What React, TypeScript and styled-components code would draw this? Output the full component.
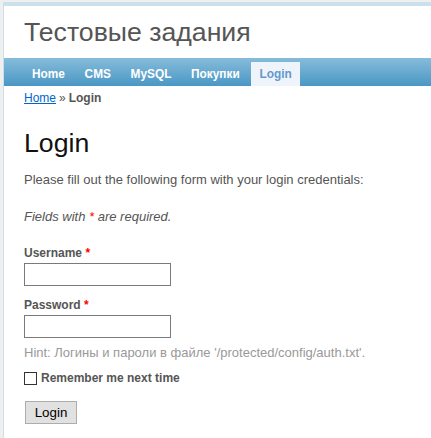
import React from "react";
import styled, { createGlobalStyle } from "styled-components";

const Global = createGlobalStyle`
  html, body {
    margin: 0;
    padding: 0;
    overflow: hidden;
    background: #efefef;
  }
  body {
    color: #555;
    font-family: "Liberation Sans", Arial, Helvetica, sans-serif;
    font-size: 13px;
    line-height: 20px;
  }
`;

const Page = styled.div`
  margin: 2px 0 0 3px;
  background: #fff;
  border: 1px solid #c9e0ed;
  border-right: none;
  min-height: 440px;
`;

const Header = styled.header`
  border-top: 3px solid #c9e0ed;
`;

const Logo = styled.div`
  padding: 10px 20px;
  font-size: 26.667px;
  line-height: 32px;
  color: #555;
`;

const Menu = styled.nav`
  height: 28px;
  box-sizing: border-box;
  padding: 4px 20px 0;
  display: flex;
  align-items: flex-end;
  gap: 3.7px;
  background: linear-gradient(#86bcda, #4a97c5);
`;

const MenuItem = styled.a<{ $active?: boolean }>`
  display: block;
  height: 24px;
  line-height: 24px;
  padding: 0 8px;
  font-size: 11.85px;
  font-weight: bold;
  text-decoration: none;
  color: ${(p) => (p.$active ? "#6399cd" : "#fff")};
  background: ${(p) => (p.$active ? "#eff4fa" : "transparent")};
`;

const Breadcrumbs = styled.div`
  padding: 5px 20px;
  font-size: 12px;
  line-height: 14px;
`;

const CrumbLink = styled.a`
  color: #0066cc;
  text-decoration: underline;
`;

const Sep = styled.span`
  margin: 0 3px;
`;

const Current = styled.span`
  font-weight: bold;
`;

const Content = styled.main`
  padding: 20px;
  display: flex;
  flex-direction: column;
  align-items: flex-start;
`;

const Title = styled.h1`
  margin: 0 0 13.33px;
  font-size: 26.667px;
  line-height: 26.667px;
  font-weight: normal;
  color: #111;
`;

const Text = styled.p<{ $italic?: boolean; $mb?: number }>`
  margin: 0 0 ${(p) => p.$mb ?? 0}px;
  font-style: ${(p) => (p.$italic ? "italic" : "normal")};
`;

const Required = styled.span`
  color: red;
`;

const Label = styled.label<{ $mt: number }>`
  display: block;
  margin-top: ${(p) => p.$mt}px;
  font-size: 12px;
  line-height: 18px;
  font-weight: bold;
`;

const Input = styled.input`
  margin: 1px 0 0;
  width: 147px;
  height: 23px;
  box-sizing: border-box;
  border: 1px solid #7a7a7a;
  padding: 2px;
  font: inherit;
  background: #fff;
`;

const Hint = styled.p`
  margin: 5px 0 0;
  color: #999;
`;

const CheckRow = styled.div`
  margin-top: 6px;
  display: flex;
  align-items: center;
  gap: 4px;
`;

const Check = styled.input`
  appearance: none;
  margin: 0;
  width: 13px;
  height: 13px;
  box-sizing: border-box;
  border: 1px solid #333;
  background: #fff;
`;

const CheckLabel = styled.label`
  font-size: 12px;
  line-height: 18px;
  font-weight: bold;
`;

const Button = styled.button`
  margin: 14px 0 0 1px;
  width: 52px;
  height: 23px;
  box-sizing: border-box;
  border: 1px solid #adadad;
  background: #e1e1e1;
  color: #000;
  font-family: "Liberation Sans", Arial, sans-serif;
  font-size: 13.333px;
  padding: 0;
`;

export default function App() {
  return (
    <>
      <Global />
      <Page>
        <Header>
          <Logo>Тестовые задания</Logo>
        </Header>
        <Menu>
          <MenuItem href="#">Home</MenuItem>
          <MenuItem href="#">CMS</MenuItem>
          <MenuItem href="#">MySQL</MenuItem>
          <MenuItem href="#">Покупки</MenuItem>
          <MenuItem href="#" $active>
            Login
          </MenuItem>
        </Menu>
        <Breadcrumbs>
          <CrumbLink href="#">Home</CrumbLink>
          <Sep>»</Sep>
          <Current>Login</Current>
        </Breadcrumbs>
        <Content>
          <Title>Login</Title>
          <Text $mb={17}>Please fill out the following form with your login credentials:</Text>
          <Text $italic>
            Fields with <Required>*</Required> are required.
          </Text>
          <Label $mt={17} htmlFor="u">
            Username <Required>*</Required>
          </Label>
          <Input id="u" type="text" />
          <Label $mt={10} htmlFor="p">
            Password <Required>*</Required>
          </Label>
          <Input id="p" type="password" />
          <Hint>Hint: Логины и пароли в файле '/protected/config/auth.txt'.</Hint>
          <CheckRow>
            <Check type="checkbox" id="r" />
            <CheckLabel htmlFor="r">Remember me next time</CheckLabel>
          </CheckRow>
          <Button type="button">Login</Button>
        </Content>
      </Page>
    </>
  );
}
